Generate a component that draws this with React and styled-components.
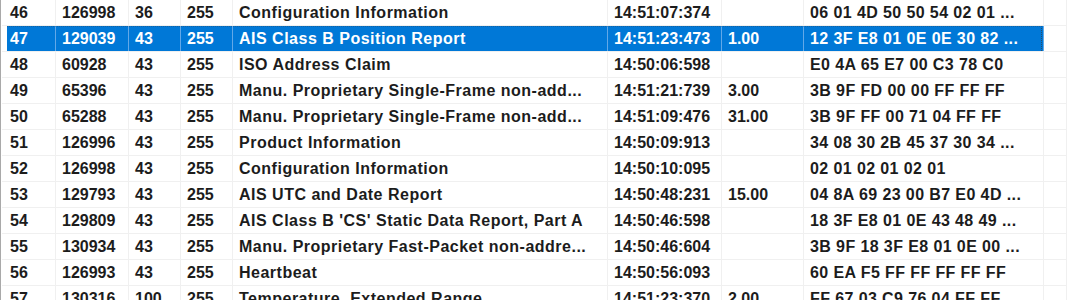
import React from 'react';
import styled, { createGlobalStyle, css } from 'styled-components';

const GlobalStyle = createGlobalStyle`
  html, body {
    margin: 0;
    padding: 0;
    background: #ffffff;
    overflow: hidden;
  }
`;

const ListView = styled.div`
  width: 1067px;
  height: 300px;
  overflow: hidden;
  background: #ffffff;
  border-left: 1px solid #a9a9a9;
  padding-left: 1px;
  box-sizing: border-box;
  font-family: 'Liberation Sans', Arial, sans-serif;
  font-weight: bold;
  font-size: 16px;
  color: #1c1c1c;
`;

const Row = styled.div`
  position: relative;
  display: grid;
  grid-template-columns: 54px 73px 52px 52px 375px 114px 82px 240px 1fr;
  height: 26px;
  box-sizing: border-box;
  border-bottom: 1px solid #f0f0f0;

  ${(p) =>
    p.$selected &&
    css`
      color: #ffffff;
      &::after {
        content: '';
        position: absolute;
        left: 5px;
        top: 0;
        width: 1035px;
        height: 25px;
        box-sizing: border-box;
        border-right: 1px dotted rgba(60, 60, 60, 0.7);
        border-top: 1px dotted rgba(60, 60, 60, 0.35);
        pointer-events: none;
      }
    `}
`;

const Cell = styled.div`
  box-sizing: border-box;
  padding-left: ${(p) => (p.$first ? 8 : 6)}px;
  line-height: 25px;
  white-space: nowrap;
  overflow: hidden;
  letter-spacing: ${(p) => p.$spacing || 0}px;
  border-right: 1px solid #f0f0f0;

  ${(p) =>
    p.$selected &&
    css`
      border-right-color: #62a8e8;
      background: ${p.$first
        ? 'linear-gradient(to right, transparent 5px, #0078d7 5px)'
        : '#0078d7'};
    `}
`;

const rows = [
  ['46', '126998', '36', '255', 'Configuration Information', '14:51:07:374', '', '06 01 4D 50 50 54 02 01 ...'],
  ['47', '129039', '43', '255', 'AIS Class B Position Report', '14:51:23:473', '1.00', '12 3F E8 01 0E 0E 30 82 ...'],
  ['48', '60928', '43', '255', 'ISO Address Claim', '14:50:06:598', '', 'E0 4A 65 E7 00 C3 78 C0'],
  ['49', '65396', '43', '255', 'Manu. Proprietary Single-Frame non-add...', '14:51:21:739', '3.00', '3B 9F FD 00 00 FF FF FF'],
  ['50', '65288', '43', '255', 'Manu. Proprietary Single-Frame non-add...', '14:51:09:476', '31.00', '3B 9F FF 00 71 04 FF FF'],
  ['51', '126996', '43', '255', 'Product Information', '14:50:09:913', '', '34 08 30 2B 45 37 30 34 ...'],
  ['52', '126998', '43', '255', 'Configuration Information', '14:50:10:095', '', '02 01 02 01 02 01'],
  ['53', '129793', '43', '255', 'AIS UTC and Date Report', '14:50:48:231', '15.00', '04 8A 69 23 00 B7 E0 4D ...'],
  ['54', '129809', '43', '255', "AIS Class B 'CS' Static Data Report, Part A", '14:50:46:598', '', '18 3F E8 01 0E 43 48 49 ...'],
  ['55', '130934', '43', '255', 'Manu. Proprietary Fast-Packet non-addre...', '14:50:46:604', '', '3B 9F 18 3F E8 01 0E 00 ...'],
  ['56', '126993', '43', '255', 'Heartbeat', '14:50:56:093', '', '60 EA F5 FF FF FF FF FF'],
  ['57', '130316', '100', '255', 'Temperature, Extended Range', '14:51:23:370', '2.00', 'FF 67 03 C9 76 04 FF FF'],
];

// letter spacing per column, the text columns render a bit wider
const spacing = [0, 0, 0, 0, 0.5, 0, 0, 0.4];

export default function App() {
  return (
    <>
      <GlobalStyle />
      <ListView>
        {rows.map((r) => {
          const sel = r[0] === '47';
          return (
            <Row key={r[0]} $selected={sel}>
              {r.map((v, i) => (
                <Cell key={i} $first={i === 0} $selected={sel} $spacing={spacing[i]}>
                  {v}
                </Cell>
              ))}
              <Cell />
            </Row>
          );
        })}
      </ListView>
    </>
  );
}
